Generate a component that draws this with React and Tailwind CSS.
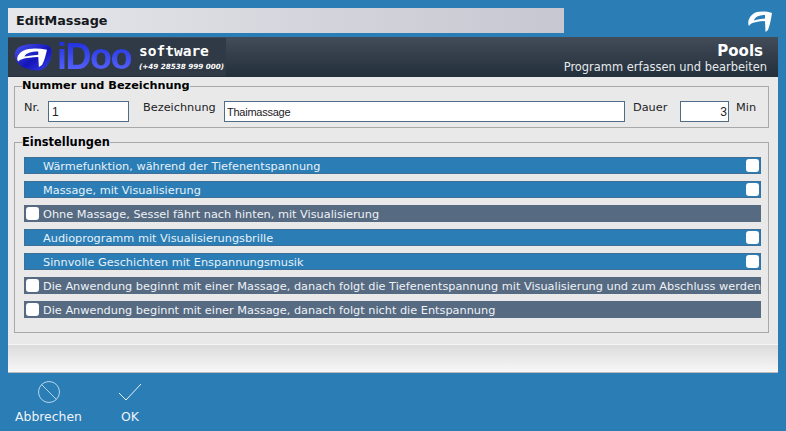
import React from "react";

const options = [
  { label: "Wärmefunktion, während der Tiefenentspannung", on: true },
  { label: "Massage, mit Visualisierung", on: true },
  { label: "Ohne Massage, Sessel fährt nach hinten, mit Visualisierung", on: false },
  { label: "Audioprogramm mit Visualisierungsbrille", on: true },
  { label: "Sinnvolle Geschichten mit Enspannungsmusik", on: true },
  {
    label:
      "Die Anwendung beginnt mit einer Massage, danach folgt die Tiefenentspannung mit Visualisierung und zum Abschluss werden",
    on: false,
  },
  { label: "Die Anwendung beginnt mit einer Massage, danach folgt nicht die Entspannung", on: false },
];

const swirlPath =
  "M24 2 C17 0 9 0 5 3 C1 6 -1 11 1 15 C3 12 6 11 17 10 L17.5 21 L20 19 C22 14 23 8 24 2 Z M17 4 L17 7.5 C12 8 8 9 6 9.5 C7 6 11 4 17 4 Z";

function OptionRow({ label, on }) {
  if (on) {
    return (
      <div className="flex h-[17px] items-center border border-[#3f6f96] bg-[#2a7db5] pl-[18px] pr-[1px] text-[#e6f1f8]">
        <span className="flex-1 self-start truncate pt-[1px] leading-[15px]">{label}</span>
        <span className="h-[13px] w-[13px] rounded-[3px] bg-white" />
      </div>
    );
  }
  return (
    <div className="flex h-[17px] items-center bg-[#566a82] pl-[2px] text-[#eef2f6]">
      <span className="mr-[4px] h-[13px] w-[13px] shrink-0 rounded-[3px] bg-white" />
      <span className="flex-1 self-start overflow-hidden whitespace-nowrap pt-[2px] leading-[15px]">{label}</span>
    </div>
  );
}

function Logo() {
  return (
    <div className="flex h-[38px] w-[218px] items-center self-center bg-[#2f3a46] pl-[5px]">
      <svg viewBox="0 0 40 27" className="h-[27px] w-[40px] shrink-0">
        <defs>
          <linearGradient id="blob" x1="0" y1="0" x2="1" y2="1">
            <stop offset="0" stopColor="#4a55f0" />
            <stop offset="0.55" stopColor="#1414b8" />
            <stop offset="1" stopColor="#3a44ea" />
          </linearGradient>
        </defs>
        <path
          d="M6 3 C14 -1 30 -1 36 2 C41 6 39 16 33 23 C29 28 20 27 12 24 C4 21 -3 10 6 3 Z"
          fill="url(#blob)"
        />
        <path d={swirlPath} fill="#ffffff" fillRule="evenodd" transform="translate(4 4) scale(1.25 0.9)" />
      </svg>
      <span className="ml-[4px] w-[82px] shrink-0 bg-gradient-to-b from-[#1c28dc] to-[#6068ff] bg-clip-text font-['Liberation_Sans',sans-serif] text-[36px] font-bold leading-[36px] tracking-[-1.5px] text-transparent">
        iDoo
      </span>
      <div className="flex flex-col whitespace-nowrap text-white">
        <span className="font-['DejaVu_Sans_Mono',monospace] text-[14.5px] font-bold leading-[17px]">software</span>
        <span className="mt-[2px] text-[7.2px] font-bold italic leading-[10px]">(+49 28538 999 000)</span>
      </div>
    </div>
  );
}

function FooterButton({ label, children, className }) {
  return (
    <div className={`flex flex-col items-center text-[12.4px] text-[#eef4f9] ${className}`}>
      <svg viewBox="0 0 24 24" className="h-[24px] w-[24px]" fill="none">
        {children}
      </svg>
      <span className="mt-[5px] leading-[16px]">{label}</span>
    </div>
  );
}

export default function App() {
  return (
    <div className="h-[431px] w-[786px] overflow-hidden bg-[#2a7db5] px-[8px] pt-[8px] font-['DejaVu_Sans',sans-serif] text-[11.3px] text-[#1d2226]">
      <div className="flex h-[25px] items-start justify-between">
        <div className="flex h-[25px] w-[556px] items-center bg-gradient-to-r from-[#e6e7eb] to-[#c6c7d0] pl-[8px] text-[12.8px] font-bold text-[#15181c]">
          EditMassage
        </div>
        <svg viewBox="0 0 24 21" className="mr-[6px] mt-[3px] h-[21px] w-[24px]">
          <path d={swirlPath} fill="#ffffff" fillRule="evenodd" />
        </svg>
      </div>

      <div className="mt-[4px] flex h-[40px] justify-between bg-gradient-to-b from-[#434c59] to-[#232f3b]">
        <Logo />
        <div className="flex flex-col items-end pr-[11px] pt-[5px] text-white">
          <span className="pr-[4px] text-[15px] font-bold leading-[18px]">Pools</span>
          <span className="text-[11.45px] leading-[15px] text-[#e6e9ec]">Programm erfassen und bearbeiten</span>
        </div>
      </div>

      <div className="h-[267px] bg-[#e9e9e9] pl-[6px] pr-[9px] pt-[2px]">
        <fieldset className="h-[49px] border border-[#a8a8a8] pl-[9px] pr-[10px]">
          <legend className="-ml-[2px] text-[11.3px] font-bold leading-[14px] text-black">Nummer und Bezeichnung</legend>
          <div className="flex items-start pt-[8px] leading-[14px]">
            <span className="w-[24px]">Nr.</span>
            <input
              readOnly
              value="1"
              className="h-[21px] w-[81px] border border-[#4f6d87] bg-white px-[3px] font-['Liberation_Sans',sans-serif] text-[12px] outline-none"
            />
            <span className="ml-[14px] w-[81px]">Bezeichnung</span>
            <input
              readOnly
              value="Thaimassage"
              className="h-[21px] w-[401px] border border-[#4f6d87] bg-white px-[2px] font-['Liberation_Sans',sans-serif] text-[11px] tracking-[-0.25px] outline-none"
            />
            <span className="ml-[8px] w-[47px]">Dauer</span>
            <input
              readOnly
              value="3"
              className="h-[21px] w-[49px] border border-[#4f6d87] bg-white px-[1px] text-right font-['Liberation_Sans',sans-serif] text-[12px] outline-none"
            />
            <span className="ml-[7px]">Min</span>
          </div>
        </fieldset>

        <fieldset className="mt-[7px] h-[198px] border border-[#a8a8a8] pl-[9px] pr-[7px]">
          <legend className="-ml-[2px] text-[11.4px] font-bold leading-[14px] text-black">Einstellungen</legend>
          <div className="flex flex-col gap-[7px] pt-[8px]">
            {options.map((o) => (
              <OptionRow key={o.label} label={o.label} on={o.on} />
            ))}
          </div>
        </fieldset>
      </div>

      <div className="h-[29px] border-t border-b border-[#f5f5f5] border-b-[#bbbbbb] bg-gradient-to-b from-[#dcdcdc] to-[#f7f7f7]" />

      <div className="flex pt-[7px]">
        <FooterButton label="Abbrechen" className="ml-[7px] w-[67px]">
          <circle cx="12" cy="12" r="10.5" stroke="#b9d6ea" strokeWidth="1" />
          <path d="M4.5 4.5 L19.5 19.5" stroke="#b9d6ea" strokeWidth="1" />
        </FooterButton>
        <FooterButton label="OK" className="ml-[23px] w-[50px]">
          <path d="M1 13 L8 20 L23 4" stroke="#ffffff" strokeWidth="0.9" />
        </FooterButton>
      </div>
    </div>
  );
}
